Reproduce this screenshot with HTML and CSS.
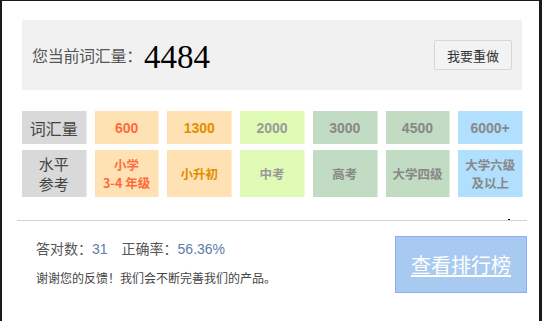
FILE: index.html
```html
<!DOCTYPE html>
<html lang="zh-CN">
<head>
<meta charset="utf-8">
<title>词汇量测试结果</title>
<link rel="stylesheet" href="styles.css">
</head>
<body>
<div class="main">
  <div class="top">
    <div class="result">
      <span class="label">您当前词汇量：</span><span class="num" lang="en">4484</span>
    </div>
    <button class="redo">我要重做</button>
  </div>

  <div class="levels">
    <div class="cell head">词汇量</div>
    <div class="cell c2 v">600</div>
    <div class="cell c3 v">1300</div>
    <div class="cell c4 v">2000</div>
    <div class="cell c5 v">3000</div>
    <div class="cell c5 v">4500</div>
    <div class="cell c7 v">6000+</div>

    <div class="cell head two">水平<br>参考</div>
    <div class="cell c2 r">小学<br>3-4 年级</div>
    <div class="cell c3 r">小升初</div>
    <div class="cell c4 r">中考</div>
    <div class="cell c5 r">高考</div>
    <div class="cell c5 r">大学四级</div>
    <div class="cell c7 r">大学六级<br>及以上</div>
  </div>
</div>

<div class="sep"></div>

<div class="bottom">
  <div class="info">
    <p class="stats">答对数：<span class="n">31</span>　正确率：<span class="n">56.36%</span></p>
    <p class="thanks">谢谢您的反馈！我们会不断完善我们的产品。</p>
  </div>
  <a class="rank" href="#">查看排行榜</a>
</div>
</body>
</html>
```

FILE: styles.css
```css
html, body {
  margin: 0;
  padding: 0;
}

body {
  width: 542px;
  height: 321px;
  box-sizing: border-box;
  border-top: 1px solid #1a1a1a;
  border-left: 2px solid #1a1a1a;
  border-right: 3px solid #1a1a1a;
  background: #fff;
  font-family: "Noto Sans CJK SC", "Noto Sans", sans-serif;
  color: #444;
  overflow: hidden;
}

.main {
  padding: 19px 0 0 20px;
}

.top {
  width: 500px;
  height: 70px;
  box-sizing: border-box;
  background: #f1f1f1;
  display: flex;
  align-items: center;
  justify-content: space-between;
  padding: 0 10px;
}

.result {
  display: flex;
  align-items: center;
}

.label {
  font-size: 16px;
  color: #555;
  line-height: 20px;
  letter-spacing: -0.3px;
}

.result .num {
  font-family: "Liberation Serif", "Times New Roman", Tinos, "DejaVu Serif", "Noto Serif", serif;
  font-size: 33px;
  font-weight: normal;
  color: #000;
  line-height: 36px;
  margin-top: 3px;
  margin-left: 2px;
}

.redo {
  width: 78px;
  height: 30px;
  box-sizing: border-box;
  background: #f3f3f3;
  border: 1px solid #d6d6d6;
  border-radius: 2px;
  font-family: "Noto Sans CJK SC", sans-serif;
  font-size: 13px;
  color: #333;
  padding: 0;
}

.levels {
  margin-top: 21px;
  width: 501px;
  display: grid;
  grid-template-columns: repeat(7, 1fr);
  grid-template-rows: 33px 47px;
  column-gap: 8px;
  row-gap: 6px;
}

.cell {
  display: flex;
  align-items: center;
  justify-content: center;
  text-align: center;
  box-sizing: border-box;
  border-right: 1px solid rgba(255, 255, 255, 0.45);
}

.head {
  background: #d9d9d9;
  font-size: 16px;
  color: #444;
  line-height: 20px;
}

.head.two {
  font-size: 15px;
  line-height: 20px;
}

.v {
  font-family: "Liberation Sans", sans-serif;
  font-size: 14px;
  font-weight: bold;
}

.r {
  font-size: 12.5px;
  font-weight: bold;
  line-height: 18px;
}

.c2 { background: #ffe2b3; color: #ff6b3d; }
.c3 { background: #ffe2b3; color: #e08e00; }
.c4 { background: #e0fbb5; color: #9a9a9a; }
.c5 { background: #c1dcc2; color: #888; }
.c7 { background: #b1e0fe; color: #888; }

.sep {
  position: relative;
  margin: 23px 0 0 15px;
  width: 510px;
  height: 1px;
  background: #d2d2d2;
}

.sep::after {
  content: "";
  position: absolute;
  left: 491px;
  top: -1px;
  width: 2px;
  height: 1px;
  background: #000;
}

.bottom {
  margin-left: 15px;
  width: 510px;
  box-sizing: border-box;
  padding-left: 19px;
  display: flex;
  justify-content: space-between;
  align-items: flex-start;
}

.info p {
  margin: 0;
}

.stats {
  margin-top: 17px !important;
  font-size: 14px;
  line-height: 20px;
  color: #555;
}

.stats .n {
  font-family: "Liberation Sans", sans-serif;
  color: #5b7ea6;
}

.thanks {
  margin-top: 11px !important;
  font-size: 12px;
  line-height: 16px;
  color: #444;
}

.rank {
  margin-top: 15px;
  width: 132px;
  height: 57px;
  box-sizing: border-box;
  display: flex;
  align-items: center;
  justify-content: center;
  background: #a8caf0;
  border: 1px solid #8cadf6;
  color: #fff;
  font-size: 20px;
  text-decoration: underline;
  text-underline-offset: 2px;
}
```
